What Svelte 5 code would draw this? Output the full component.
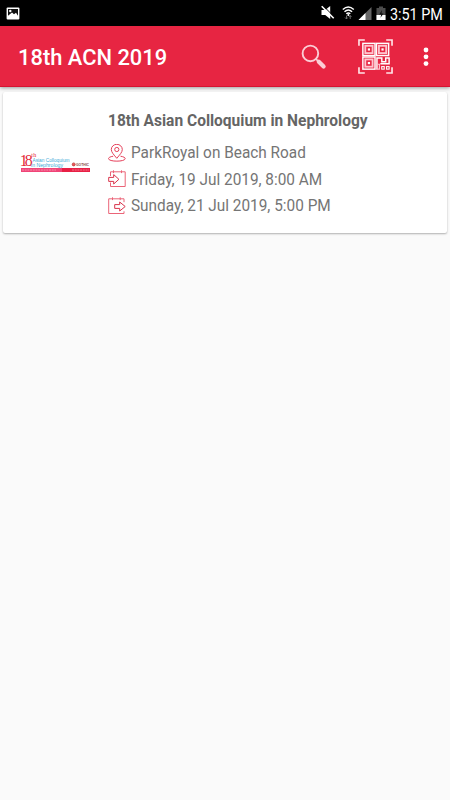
<script>
  const rows = [
    { icon: 'pin', text: 'ParkRoyal on Beach Road' },
    { icon: 'in', text: 'Friday, 19 Jul 2019, 8:00 AM' },
    { icon: 'out', text: 'Sunday, 21 Jul 2019, 5:00 PM' }
  ];
  const finders = [[6, 5], [20, 5], [6, 19]];
</script>

<div class="screen">
  <div class="status">
    <svg class="picture" width="14" height="13" viewBox="0 0 14 13">
      <rect x=".6" y=".6" width="12.8" height="11.8" rx="1" fill="#fff" />
      <path d="M2 2h10v6.8l-2-3-2 1.5-2-1.7-4 3.2z" fill="#111" />
      <circle cx="4.3" cy="4" r="1.2" fill="#fff" />
    </svg>
    <svg class="signals" width="66" height="18" viewBox="320 5 66 18">
      <path d="M320.5 10h3.7l5-4v13l-5-4h-3.7z" fill="#fff" />
      <path d="M322 5.6l11.5 11.5" stroke="#000" stroke-width="1" />
      <path d="M320.7 6.3l12 12" stroke="#fff" stroke-width="1.6" />
      <g fill="none" stroke="#fff" stroke-width="1.4">
        <path d="M341.8 9.5q5.5-5.2 11 0M343.5 11.8q3.8-3.5 7.6 0M345.3 13.8q2-1.8 4 0" />
      </g>
      <circle cx="347.3" cy="15" r="1" fill="#fff" />
      <path d="M345.5 15.5v3.5m-1.5-1.5 1.5 1.5 1.2-1.5M349.2 19v-3.5m-1.3 1.5 1.3-1.5 1.3 1.5" fill="none" stroke="#777" stroke-width=".9" />
      <path d="M370.5 7v13h-13z" fill="#666" />
      <path d="M364.5 13v7h-7z" fill="#fff" />
      <path d="M378 6.5h4v1.5h2.5v12h-9v-12h2.5z" fill="#4c4c4c" />
      <path d="M375.5 15h9v5h-9z" fill="#fff" />
      <path d="M381 10l-2.8 4.5h2l-.7 3.3 3-4.3h-2z" fill="#111" />
    </svg>
    <span class="clock">3:51 PM</span>
  </div>

  <header>
    <h1>18th ACN 2019</h1>
    <svg class="search" width="26" height="26" viewBox="301 44 26 26">
      <circle cx="310.4" cy="53.4" r="7.8" fill="none" stroke="#fbcdd5" stroke-width="1.9" />
      <path d="M315.6 58.6l3 3" stroke="#fbcdd5" stroke-width="1.6" />
      <path d="M318.8 61.8l4.8 4.8" stroke="#fbcdd5" stroke-width="4.2" stroke-linecap="round" />
    </svg>
    <svg class="qr" width="35" height="35" viewBox="0 0 36 36" fill="none" stroke="#fff">
      <path d="M1 7V1h6M29 1h6v6M35 29v6h-6M7 35H1v-6" stroke-width="1.7" stroke="#ffe3e7" />
      {#each finders as [x, y]}
        <rect x={x - 1} y={y - .5} width="12.5" height="12.5" stroke-width="1.5" />
        <rect x={x + 1.5} y={y + 2} width="7.5" height="7.5" stroke-width="1.9" stroke="#ffc4ce" />
        <rect x={x + 4.1} y={y + 4.6} width="2.3" height="2.3" fill="#fff" stroke="none" />
      {/each}
      <path d="M19.5 31.5v-12h5v4h4v-4h3.5v6h-9" stroke-width="1.5" />
      <path d="M20 26h2v5h-2" stroke-width="1.2" stroke="#ffc4ce" />
      <rect x="24.4" y="28.4" width="2.6" height="2.6" stroke-width="1.1" />
      <rect x="29.4" y="28.4" width="2.6" height="2.6" stroke-width="1.1" />
    </svg>
    <svg class="more" width="6" height="20" viewBox="0 0 6 20" fill="#fff">
      <circle cx="3" cy="3" r="2.4" /><circle cx="3" cy="9.8" r="2.4" /><circle cx="3" cy="16.6" r="2.4" />
    </svg>
  </header>

  <article>
    <svg class="logo" width="72" height="24" viewBox="20 150 72 24">
      <text x="19.8" y="166" class="eighteen" textLength="13">18</text>
      <text x="31.3" y="157" class="th" textLength="5">th</text>
      <text x="32.5" y="161.6" class="blue" textLength="37" lengthAdjust="spacingAndGlyphs">Asian Colloquium</text>
      <text x="31" y="166.5" class="blue" textLength="32" lengthAdjust="spacingAndGlyphs">in Nephrology</text>
      <circle cx="73.7" cy="164.4" r="1.5" fill="#e55" stroke="#b33434" stroke-width=".7" />
      <text x="76" y="166" class="brand" textLength="13" lengthAdjust="spacingAndGlyphs">GOTHIC</text>
      <rect x="21" y="168" width="69" height="4" fill="#f04477" />
      <rect x="62" y="168" width="28" height="4" fill="#e82045" />
      <path d="M22 170h34" stroke="#f78fae" stroke-dasharray="2 .7" />
      <path d="M72 170h17" stroke="#f27088" stroke-dasharray="2 .7" />
    </svg>
    <div class="details">
      <h2>18th Asian Colloquium in Nephrology</h2>
      {#each rows as row}
        <div class="row">
          <svg width="18" height="18" viewBox="0 0 18 18" fill="none" stroke="#e5405a" stroke-width="1">
            {#if row.icon === 'pin'}
              <path d="M8.8 14.3C6 10.8 3.3 8.4 3.3 5.5a5.5 5.2 0 0 1 11 0c0 2.9-2.7 5.3-5.5 8.8z" />
              <circle cx="8.8" cy="5.5" r="2.1" />
              <path d="M5.2 12.2c-3 .5-4.7 1.4-4.7 2.4 0 3.4 16.7 3.4 16.7 0 0-1-1.7-1.9-4.7-2.4" />
            {:else if row.icon === 'in'}
              <path d="M2.5 6V1.8h14.7v14.7H2.5V12.5M5.5.3v2.8M13.5.3v2.8" stroke="#eb6478" />
              <path d="M.7 7.4h5V4.6l5.2 4.7-5.2 4.7v-2.6h-5z" stroke="#d9344c" />
            {:else}
              <path d="M16 5.2V1.8H.7v14.7H16v-2.2M4.5.3v2.8M12.2.3v2.8" stroke="#eb6478" />
              <path d="M6.7 7.6h5V5l5.5 4.5-5.5 4.5v-2.6h-5z" stroke="#d9344c" />
            {/if}
          </svg>
          <span>{row.text}</span>
        </div>
      {/each}
    </div>
  </article>
</div>

<style>
  .screen {
    width: 450px;
    height: 800px;
    background: #fafafa;
    font-family: Roboto, sans-serif;
    overflow: hidden;
  }
  .status {
    height: 26px;
    box-sizing: border-box;
    background: #000;
    display: flex;
    align-items: flex-start;
    padding-left: 6px;
  }
  .picture { margin-top: 7px; flex: none; }
  .signals { margin: 5px 0 0 301px; flex: none; }
  .clock {
    flex: none;
    color: #fff;
    font-size: 16.5px;
    line-height: 20px;
    margin: 4.6px 0 0 3px;
    white-space: nowrap;
    transform: scaleX(.87);
    transform-origin: left;
  }
  header {
    height: 61px;
    box-sizing: border-box;
    background: #e72542;
    border-bottom: 1px solid #d51431;
    box-shadow: 0 1px 4px rgba(0, 0, 0, .4);
    display: flex;
    align-items: flex-start;
    padding-left: 18px;
  }
  h1 {
    margin: 18.4px 0 0;
    width: 283px;
    font-size: 21.9px;
    line-height: 28px;
    font-weight: 500;
    color: #fff;
    white-space: nowrap;
  }
  .search { margin-top: 18px; }
  .qr { margin: 13px 0 0 31px; }
  .more { margin: 21px 0 0 30px; }
  article {
    height: 141px;
    box-sizing: border-box;
    margin: 5px 3px 0;
    border-radius: 2px;
    background: #fff;
    box-shadow: 0 1px 2px rgba(0, 0, 0, .3);
    display: flex;
    align-items: flex-start;
  }
  .logo { margin: 58px 0 0 17px; }
  .eighteen { font: 16px "Liberation Serif", serif; fill: #e52a3b; }
  .th { font: 6px "Liberation Serif", serif; fill: #e52a3b; }
  .blue { font: 6px "Liberation Sans", sans-serif; fill: #3aa9d6; }
  .brand { font: bold 4px "Liberation Sans", sans-serif; fill: #844; }
  .details { margin: 18px 0 0 16px; }
  h2 {
    margin: 0 0 7.5px;
    font-size: 16px;
    line-height: 22px;
    font-weight: 700;
    color: #656565;
    white-space: nowrap;
    transform: scaleX(.97);
    transform-origin: left;
  }
  .row {
    display: flex;
    align-items: center;
    height: 26.6px;
    gap: 5px;
    font-size: 16px;
    color: #757575;
    white-space: nowrap;
  }
  .row span {
    transform: scaleX(.96);
    transform-origin: left;
  }
</style>
